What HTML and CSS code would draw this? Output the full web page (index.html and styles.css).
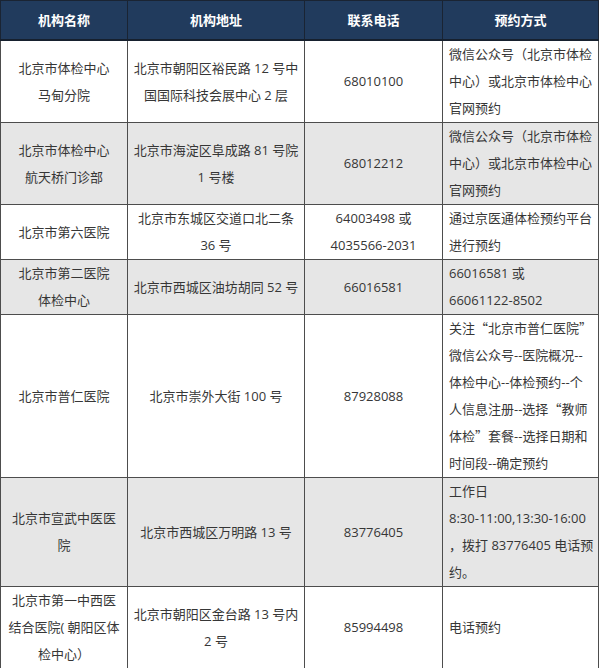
FILE: index.html
```html
<!DOCTYPE html>
<html lang="zh-CN">
<head>
<meta charset="utf-8">
<link rel="stylesheet" href="styles.css">
</head>
<body>
<table class="tbl">
  <colgroup>
    <col class="c1"><col class="c2"><col class="c3"><col class="c4">
  </colgroup>
  <thead>
    <tr><th>机构名称</th><th>机构地址</th><th>联系电话</th><th>预约方式</th></tr>
  </thead>
  <tbody>
    <tr>
      <td>北京市体检中心<br>马甸分院</td>
      <td>北京市朝阳区裕民路 12 号中国国际科技会展中心 2 层</td>
      <td>68010100</td>
      <td class="way">微信公众号（北京市体检中心）或北京市体检中心官网预约</td>
    </tr>
    <tr class="alt">
      <td>北京市体检中心<br>航天桥门诊部</td>
      <td>北京市海淀区阜成路 81 号院<br>1 号楼</td>
      <td>68012212</td>
      <td class="way">微信公众号（北京市体检中心）或北京市体检中心官网预约</td>
    </tr>
    <tr>
      <td>北京市第六医院</td>
      <td>北京市东城区交道口北二条<br>36 号</td>
      <td>64003498 或<br>4035566-2031</td>
      <td class="way">通过京医通体检预约平台进行预约</td>
    </tr>
    <tr class="alt">
      <td>北京市第二医院<br>体检中心</td>
      <td>北京市西城区油坊胡同 52 号</td>
      <td>66016581</td>
      <td class="way">66016581 或<br>66061122-8502</td>
    </tr>
    <tr>
      <td>北京市普仁医院</td>
      <td>北京市崇外大街 100 号</td>
      <td>87928088</td>
      <td class="way">关注<span class="q">“</span>北京市普仁医院<span class="q">”</span><br>微信公众号--医院概况--<br>体检中心--体检预约--个<br>人信息注册--选择<span class="q">“</span>教师<br>体检<span class="q">”</span>套餐--选择日期和<br>时间段--确定预约</td>
    </tr>
    <tr class="alt">
      <td>北京市宣武中医医<br>院</td>
      <td>北京市西城区万明路 13 号</td>
      <td>83776405</td>
      <td class="way">工作日<br>8:30-11:00,13:30-16:00<br>，拨打 83776405 电话预<br>约。</td>
    </tr>
    <tr>
      <td>北京市第一中西医<br>结合医院( 朝阳区体<br>检中心）</td>
      <td>北京市朝阳区金台路 13 号内<br>2 号</td>
      <td>85994498</td>
      <td class="way">电话预约</td>
    </tr>
  </tbody>
</table>
</body>
</html>
```

FILE: styles.css
```css
html, body {
  margin: 0;
  padding: 0;
  background: #ffffff;
}
body {
  font-family: "Open Sans", "Noto Sans CJK SC", sans-serif;
  font-size: 13px;
  color: #363636;
}
.tbl {
  border-collapse: collapse;
  width: 598px;
  margin-left: 0;
  table-layout: fixed;
}
.c1 { width: 127px; }
.c2 { width: 177px; }
.c3 { width: 138px; }
.c4 { width: 156px; }
.tbl th {
  background: #213b5d;
  color: #ffffff;
  font-weight: bold;
  height: 38px;
  padding: 0;
  border: 1px solid #1a2433;
  border-bottom: 2px solid #16202e;
  font-size: 13px;
  line-height: 18px;
  text-align: center;
  vertical-align: middle;
}
.tbl td {
  border: 1px solid #4d4d4d;
  padding: 0 4px;
  line-height: 27px;
  text-align: center;
  vertical-align: middle;
  word-break: break-all;
}
.tbl td.way {
  text-align: left;
  padding: 0 4px 0 6px;
}
.tbl tr.alt td {
  background: #e6e6e6;
}
.q {
  font-family: "Noto Sans CJK SC", sans-serif;
  line-height: 1;
}
```
